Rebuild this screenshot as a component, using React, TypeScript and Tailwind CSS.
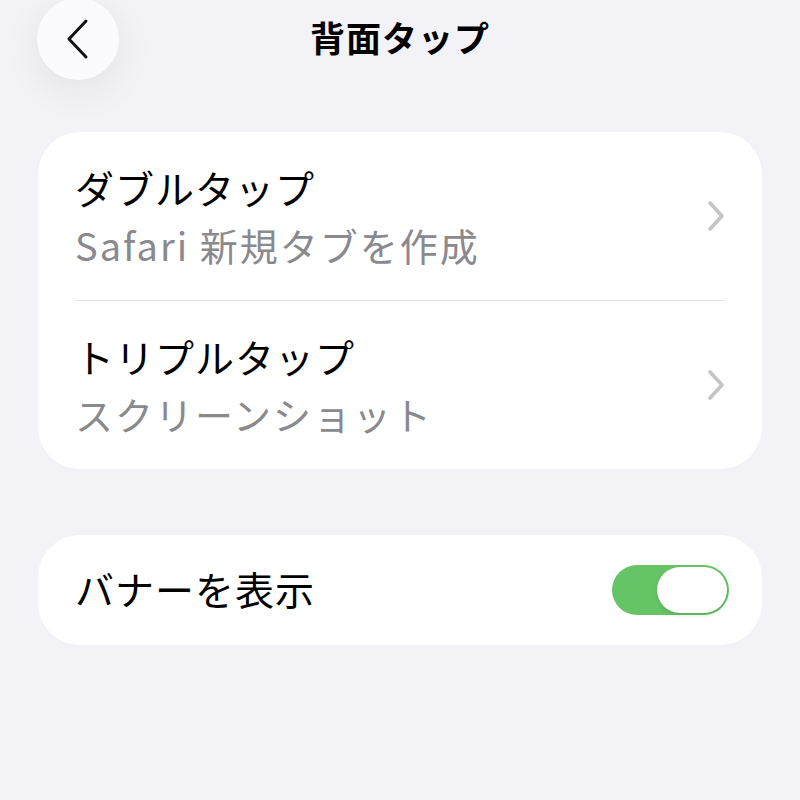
import React, { useState } from 'react';

const font = { fontFamily: '"Noto Sans CJK JP", "Noto Sans", Inter, sans-serif' };

function Chevron() {
  return (
    <svg width="18" height="32" viewBox="0 0 18 32" fill="none" className="shrink-0">
      <path d="M3 3 L15 16 L3 29" stroke="#c4c4c7" strokeWidth="3.6" strokeLinecap="round" strokeLinejoin="round" />
    </svg>
  );
}

function NavRow({ title, value }: { title: string; value: string }) {
  return (
    <div className="flex items-center py-[26px]">
      <div className="flex flex-col flex-1">
        <span className="text-[39px] leading-[58px] tracking-[1px] text-black">{title}</span>
        <span className="text-[38px] leading-[58px] tracking-[2px] text-[#8a8a8e]">{value}</span>
      </div>
      <Chevron />
    </div>
  );
}

export default function App() {
  const [banner, setBanner] = useState(true);

  return (
    <div className="w-[800px] h-[800px] bg-[#f2f2f7] overflow-hidden" style={font}>
      {/* Header */}
      <div className="flex items-center px-[37px] mt-[-2px]">
        <button className="w-[82px] h-[82px] rounded-full bg-[#fbfbfd] shadow-[0_10px_40px_rgba(0,0,0,0.07)] flex items-center justify-center">
          <svg width="28" height="44" viewBox="0 0 28 44" fill="none">
            <path d="M22 4 L5 22 L22 40" stroke="#111" strokeWidth="3" strokeLinecap="round" strokeLinejoin="round" />
          </svg>
        </button>
        <h1 className="flex-1 text-center text-[35px] leading-[50px] font-bold text-black tracking-[1px] mb-[4px]">背面タップ</h1>
        <div className="w-[82px]" />
      </div>

      {/* Back tap actions */}
      <div className="mx-[38px] mt-[52px] bg-white rounded-[42px] pl-[37px] pr-[37px]">
        <NavRow title="ダブルタップ" value="Safari 新規タブを作成" />
        <div className="h-px bg-[#e2e2e6]" />
        <NavRow title="トリプルタップ" value="スクリーンショット" />
      </div>

      {/* Banner */}
      <div className="mx-[38px] mt-[66px] h-[110px] bg-white rounded-[42px] pl-[37px] pr-[33px] flex items-center">
        <span className="flex-1 text-[39px] leading-[58px] tracking-[1px] text-black mb-[4px]">バナーを表示</span>
        <button
          onClick={() => setBanner(!banner)}
          className={`w-[117px] h-[50px] rounded-full p-[2px] flex items-center ${banner ? 'bg-[#65c466] justify-end' : 'bg-[#e9e9eb] justify-start'}`}
        >
          <span className="w-[70px] h-[46px] rounded-full bg-white shadow-[0_2px_4px_rgba(0,0,0,0.12)]" />
        </button>
      </div>
    </div>
  );
}
